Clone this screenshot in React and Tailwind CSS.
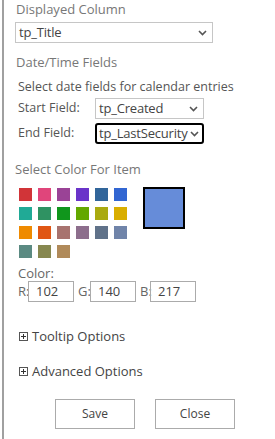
import React from 'react';

const swatches = [
  '#d13438', '#e0457b', '#9a4396', '#6a34c9', '#31659a', '#3266d2',
  '#20aa96', '#2f9262', '#10961c', '#63a800', '#a9aa10', '#d9ae00',
  '#ef8a00', '#e05614', '#a8736f', '#8d6e8c', '#607289', '#7084a9',
  '#5b8a82', '#878850', '#b08a5a',
];

function Chevron() {
  return (
    <svg width="9" height="6" viewBox="0 0 9 6" className="shrink-0">
      <path d="M1 1 L4.5 4.5 L8 1" fill="none" stroke="#555" strokeWidth="1.6" />
    </svg>
  );
}

function Select({ value, className = '', active }) {
  return (
    <div
      className={
        'flex items-center justify-between h-[21px] text-[#444] text-[13px] tracking-[-0.2px] ' +
        (active
          ? 'border-2 border-black rounded-[3px] pl-[2px] pr-[3px] '
          : 'border border-[#c6c6c6] pl-[3px] pr-[5px] ') +
        className
      }
    >
      <span className="leading-none whitespace-nowrap">{value}</span>
      <Chevron />
    </div>
  );
}

function PlusBox() {
  return (
    <svg width="9" height="9" viewBox="0 0 9 9" className="shrink-0">
      <rect x="0.5" y="0.5" width="8" height="8" fill="#fff" stroke="#555" />
      <path d="M2 4.5 H7 M4.5 2 V7" stroke="#333" strokeWidth="1" />
    </svg>
  );
}

function RgbInput({ label, value, labelWidth }) {
  return (
    <div className="flex items-center">
      <span className={'text-[#666] text-[13px] ' + labelWidth}>{label}</span>
      <div className="w-[46px] h-[21px] border border-[#ababab] pl-[7px] flex items-center text-[#444] text-[13px]">
        {value}
      </div>
    </div>
  );
}

export default function App() {
  return (
    <div
      className="w-[275px] h-[439px] bg-white pl-[2px] overflow-hidden"
      style={{ fontFamily: '"Open Sans", "Noto Sans", sans-serif', fontSize: '12.5px' }}
    >
      <div className="h-full border-l-2 border-[#a0a0a0] pl-[11px]">
        <div className="leading-[18px] text-[#777] text-[13px] ml-[1px]">Displayed Column</div>
        <Select value="tp_Title" className="w-[198px] mt-[4px]" />

        <div className="leading-[18px] text-[#777] text-[13px] mt-[10px] ml-[1px]">Date/Time Fields</div>
        <div className="ml-[3px] mt-[7px] leading-[18px] text-[#555]">Select date fields for calendar entries</div>
        <div className="flex items-center ml-[3px] mt-[2px]">
          <span className="w-[77px] text-[#555]">Start Field:</span>
          <Select value="tp_Created" className="w-[109px]" />
        </div>
        <div className="flex items-center ml-[3px] mt-[4px]">
          <span className="w-[77px] text-[#555]">End Field:</span>
          <Select value="tp_LastSecurity" className="w-[109px]" active />
        </div>

        <div className="leading-[18px] text-[#777] text-[13px] mt-[16px]">Select Color For Item</div>
        <div className="flex mt-[10px] ml-[4px]">
          <div className="grid grid-cols-[repeat(6,13px)] auto-rows-[13px] gap-[6px] w-[108px]">
            {swatches.map((c) => (
              <div key={c} style={{ backgroundColor: c }} />
            ))}
          </div>
          <div className="ml-[16px] -mt-[1px] w-[42px] h-[42px] border-2 border-black bg-[#668cd9]" />
        </div>

        <div className="ml-[3px] mt-[7px] leading-[16px] text-[#666] text-[13px]">Color:</div>
        <div className="flex gap-[4px] ml-[3px]">
          <RgbInput label="R:" value="102" labelWidth="w-[10px]" />
          <RgbInput label="G:" value="140" labelWidth="w-[12px]" />
          <RgbInput label="B:" value="217" labelWidth="w-[10px]" />
        </div>

        <div className="flex items-center gap-[4px] ml-[4px] mt-[25px] leading-[18px] text-[#444] text-[13px]">
          <PlusBox />
          <span>Tooltip Options</span>
        </div>
        <div className="flex items-center gap-[4px] ml-[4px] mt-[17px] leading-[18px] text-[#444] text-[13px]">
          <PlusBox />
          <span>Advanced Options</span>
        </div>

        <div className="flex gap-[20px] ml-[40px] mt-[19px]">
          <button className="w-[80px] h-[30px] border border-[#ababab] bg-white text-[#444] text-[12px]">Save</button>
          <button className="w-[80px] h-[30px] border border-[#ababab] bg-white text-[#444] text-[12px]">Close</button>
        </div>
      </div>
    </div>
  );
}
